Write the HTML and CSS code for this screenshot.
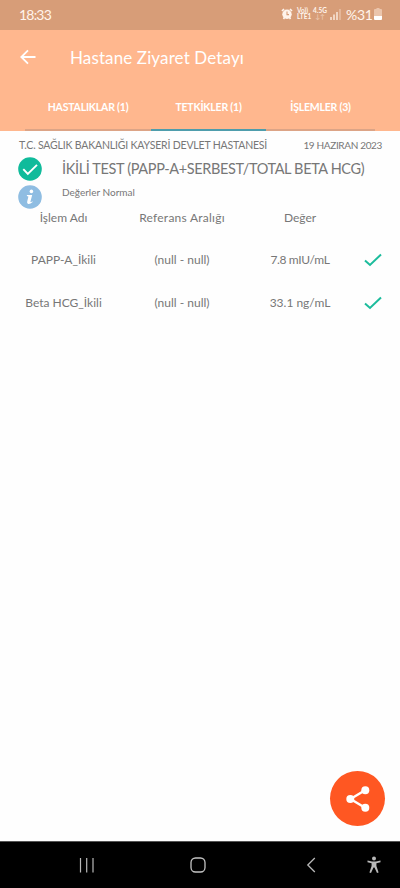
FILE: index.html
```html
<!DOCTYPE html>
<html lang="tr">

<head>
    <meta charset="UTF-8">
    <title>Hastane Ziyaret Detayı</title>
    <link rel="stylesheet" href="styles.css">
</head>

<body>

    <div class="statusbar">
        <span class="clock">18:33</span>
        <svg class="alarm" width="12" height="12" viewBox="0 0 12 12">
            <path d="M1 3 L3 1 M11 3 L9 1 M2.5 11 L3.5 9.5 M9.5 11 L8.5 9.5" stroke="#fff4ec" stroke-width="1.7" />
            <circle cx="6" cy="6.2" r="4.7" fill="#fff4ec" />
            <path d="M6 3.6 V6.6 H8" stroke="#d79d78" stroke-width="1.1" fill="none" />
        </svg>
        <div class="net volte"><span>Vo))</span><span>LTE1</span></div>
        <div class="net speed"><span>4.5G</span><span class="arrows">↓↑</span></div>
        <svg class="signal" width="11" height="12" viewBox="0 0 11 12">
            <path d="M1 9 V12 M4 6.5 V12 M7 4 V12" stroke="#fff4ec" stroke-width="1.3" />
            <path d="M10 1 V12" stroke="#ebc5ac" stroke-width="1.3" />
        </svg>
        <span class="percent">%31</span>
        <svg class="battery" width="8" height="12" viewBox="0 0 8 12">
            <path d="M2.5 0 H5.5 V1 H7 Q8 1 8 2 V8 H0 V2 Q0 1 1 1 H2.5 Z" fill="#ebc5ac" />
            <path d="M0 8 H8 V11 Q8 12 7 12 H1 Q0 12 0 11 Z" fill="#fff" />
        </svg>
    </div>

    <div class="header">
        <div class="toolbar">
            <svg width="16" height="16" viewBox="0 0 16 16" fill="none" stroke="#fff" stroke-width="1.8">
                <path d="M15.5 8 H1.5 M8 1.3 L1.3 8 L8 14.7" />
            </svg>
            <h1>Hastane Ziyaret Detayı</h1>
        </div>
        <div class="tabs">
            <div class="tab">HASTALIKLAR (1)</div>
            <div class="tab active">TETKİKLER (1)</div>
            <div class="tab">İŞLEMLER (3)</div>
        </div>
    </div>

    <div class="content">
        <div class="visit">
            <span class="hospital">T.C. SAĞLIK BAKANLIĞI KAYSERİ DEVLET HASTANESİ</span>
            <span class="date">19 HAZIRAN 2023</span>
        </div>

        <div class="test">
            <svg width="24" height="24" viewBox="0 0 24 24">
                <circle cx="12" cy="12" r="11.8" fill="#10bb9b" />
                <path d="M5.3 12.2 L9.8 17 L19 7.8" fill="none" stroke="#fff" stroke-width="1.9" />
            </svg>
            <span class="test-name">İKİLİ TEST (PAPP-A+SERBEST/TOTAL BETA HCG)</span>
        </div>
        <div class="test info">
            <svg width="24" height="24" viewBox="0 0 24 24">
                <circle cx="12" cy="12" r="11.8" fill="#8fbde2" />
                <circle cx="13.4" cy="6.4" r="1.8" fill="#fff" />
                <path d="M9 9.9 H14.2 L12.4 16.8 Q12.6 17.5 14.3 16.2 L14.7 17 Q11.5 19.7 9.8 18.8 Q8.8 18.2 9.2 16.6 L10.4 11.4 L8.8 11 Z" fill="#fff" />
            </svg>
            <span class="result">Değerler Normal</span>
        </div>

        <div class="row head">
            <span>İşlem Adı</span>
            <span class="range">Referans Aralığı</span>
            <span>Değer</span>
        </div>
        <div class="row">
            <span>PAPP-A_İkili</span>
            <span>(null - null)</span>
            <span class="value">7.8 mIU/mL</span>
            <svg width="18" height="14" viewBox="0 0 18 14"><path d="M1 7.5 L6 12 L17 1.5" fill="none" stroke="#1cbc9c" stroke-width="2" /></svg>
        </div>
        <div class="row">
            <span>Beta HCG_İkili</span>
            <span>(null - null)</span>
            <span>33.1 ng/mL</span>
            <svg width="18" height="14" viewBox="0 0 18 14"><path d="M1 7.5 L6 12 L17 1.5" fill="none" stroke="#1cbc9c" stroke-width="2" /></svg>
        </div>
    </div>

    <div class="share">
        <svg width="24" height="26" viewBox="0 0 24 26" fill="#fff">
            <path d="M19.5 4 L4.5 13 L19.5 22" fill="none" stroke="#fff" stroke-width="2.4" />
            <circle cx="19.3" cy="4.2" r="4" />
            <circle cx="4.3" cy="13" r="4" />
            <circle cx="19.3" cy="21.8" r="4" />
        </svg>
    </div>

    <div class="navbar">
        <svg width="16" height="16" viewBox="0 0 16 16" stroke="#b8b8b8" stroke-width="1.2"><path d="M1.5 1 V15.5 M7.7 1 V15.5 M14 1 V15.5" /></svg>
        <svg width="16" height="16" viewBox="0 0 16 16" fill="none" stroke="#c4c4c4" stroke-width="1.3"><rect x="1" y="1" width="14" height="14" rx="4.5" /></svg>
        <svg width="10" height="16" viewBox="0 0 10 16" fill="none" stroke="#b8b8b8" stroke-width="1.3"><path d="M8.8 1 L1.8 8 L8.8 15" /></svg>
        <svg width="14" height="18" viewBox="0 0 14 18" fill="#b8b8b8">
            <circle cx="7" cy="2.4" r="2" />
            <path d="M0.5 4.6 L5 5.4 H9 L13.5 4.6 V6.2 L9.4 7.2 V10 L11.6 16.4 L10 17 L7.5 11.5 H6.5 L4 17 L2.4 16.4 L4.6 10 V7.2 L0.5 6.2 Z" />
        </svg>
    </div>

</body>

</html>
```
FILE: styles.css
```css
body {
    font-family: Lato, "Open Sans", sans-serif;
    background-color: #fefefe;
    color: #777777;
    display: flex;
    flex-direction: column;
    height: 888px;
    margin: 0;
    overflow: hidden;
}

span,
h1,
.tab {
    white-space: nowrap;
}

svg {
    display: block;
    flex-shrink: 0;
}

.statusbar {
    height: 30px;
    box-sizing: border-box;
    padding: 0 18px 2px 19px;
    background-color: #d79d78;
    color: #fff4ec;
    display: flex;
    align-items: center;
    font-size: 14px;
}

.clock {
    margin-right: auto;
    letter-spacing: -0.8px;
}

.net {
    display: flex;
    flex-direction: column;
    font-size: 6.5px;
    line-height: 6px;
    font-weight: bold;
}

.volte {
    margin-left: 4px;
    width: 16px;
}

.speed {
    width: 14px;
    text-align: center;
}

.arrows {
    color: #ebc5ac;
}

.signal {
    margin-left: 3px;
}

.percent {
    width: 25px;
    margin-left: 5px;
    margin-right: 3px;
    letter-spacing: -0.3px;
}

.header {
    height: 101px;
    background-color: #ffb78e;
    color: #ffffff;
    display: flex;
    flex-direction: column;
}

.toolbar {
    height: 54px;
    padding: 0 20px;
    display: flex;
    align-items: center;
    gap: 34px;
}

h1 {
    margin: 0;
    font-size: 17px;
    font-weight: normal;
    letter-spacing: 0.12px;
}

.tabs {
    flex-grow: 1;
    padding: 0 25px;
    display: grid;
    grid-template-columns: 126px 115px 109px;
    font-size: 10.5px;
    font-weight: bold;
    letter-spacing: -0.2px;
}

.tab {
    display: flex;
    justify-content: center;
    align-items: center;
    border-bottom: 2px solid #dca486;
}

.tab.active {
    border-color: #4e9dac;
}

.content {
    flex-grow: 1;
}

.visit {
    height: 26px;
    padding: 2px 18px 0 19px;
    box-sizing: border-box;
    display: flex;
    justify-content: space-between;
    align-items: center;
    font-size: 10.5px;
}

.hospital {
    letter-spacing: -0.18px;
}

.date {
    font-size: 10px;
    letter-spacing: -0.35px;
}

.test {
    height: 28px;
    padding-left: 18px;
    display: flex;
    align-items: flex-start;
    gap: 20px;
}

.test-name {
    font-size: 14.5px;
    line-height: 24px;
    letter-spacing: -0.36px;
}

.info {
    height: 24px;
}

.result {
    font-size: 10px;
    line-height: 15px;
}

.row {
    height: 43px;
    padding-left: 4px;
    display: grid;
    grid-template-columns: 119px 118px 118px 27px;
    justify-items: center;
    align-items: center;
    font-size: 12px;
}

.head {
    height: 29px;
    align-items: start;
    line-height: 18px;
}

.range {
    letter-spacing: 0.25px;
}

.value {
    letter-spacing: -0.35px;
}

.share {
    width: 55px;
    height: 55px;
    margin: 0 15px 15px auto;
    border-radius: 50%;
    background-color: #ff5722;
    display: flex;
    justify-content: center;
    align-items: center;
}

.navbar {
    height: 46px;
    border-top: 1px solid #555555;
    background-color: #000000;
    display: grid;
    grid-template-columns: 111px 116px 61px 14px;
    align-items: center;
    padding-left: 79px;
}
```
